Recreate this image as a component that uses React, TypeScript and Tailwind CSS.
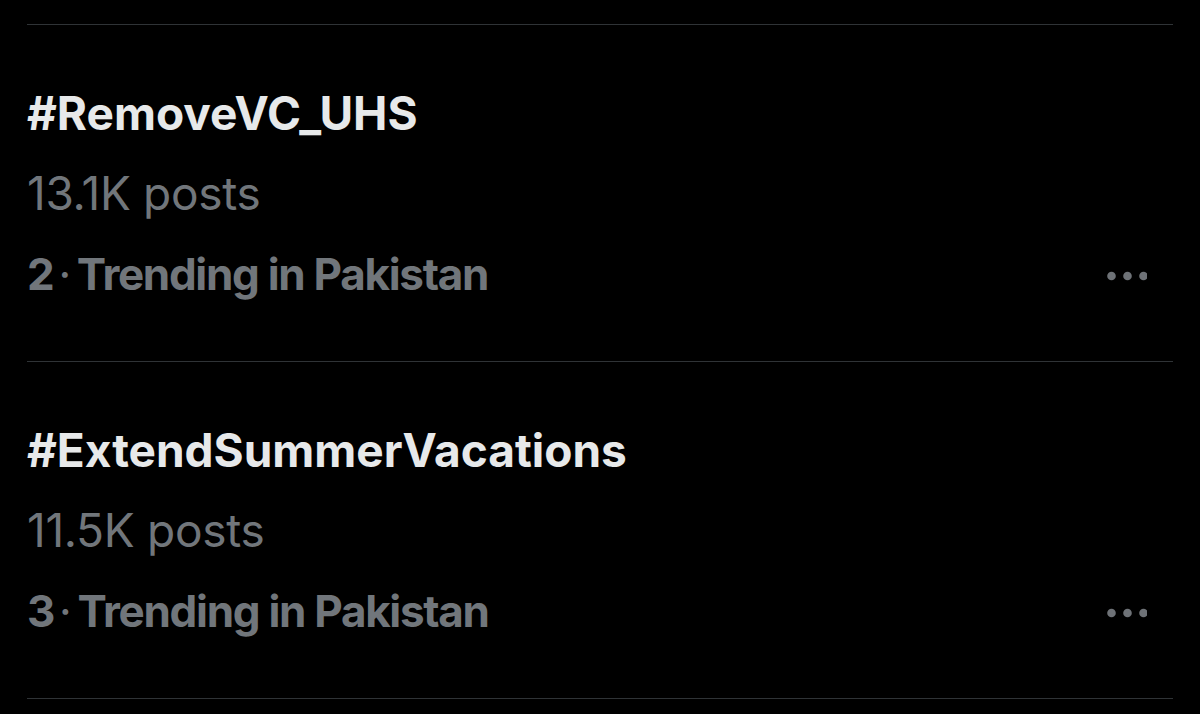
const trends = [
  { tag: '#RemoveVC_UHS', posts: '13.1K posts', rank: 2, place: 'Pakistan' },
  { tag: '#ExtendSummerVacations', posts: '11.5K posts', rank: 3, place: 'Pakistan' },
];

function MoreDots() {
  return (
    <svg width="40" height="10" viewBox="0 0 40 10" className="text-[#6e7277]">
      <circle cx="4.5" cy="5" r="4.3" fill="currentColor" />
      <circle cx="20.5" cy="5" r="4.3" fill="currentColor" />
      <circle cx="36.5" cy="5" r="4.3" fill="currentColor" />
    </svg>
  );
}

function TrendRow({ tag, posts, rank, place }: (typeof trends)[number]) {
  return (
    <div className="border-t border-[#2f3336] pt-[48px] pb-[48px] flex items-end justify-between">
      <div className="text-[46px] leading-[80px]">
        <div className="font-bold text-[#e7e9ea]">{tag}</div>
        <div className="text-[#71767b] tracking-[-0.3px]">{posts}</div>
        <div className="font-bold text-[44px] text-[#71767b] tracking-[-1.3px] pt-[2px] leading-[78px]">
          {rank}
          <span className="font-normal pl-[5px] pr-[7px]">·</span>
          Trending in {place}
        </div>
      </div>
      <div className="h-[80px] flex items-center pt-[6px] pr-[26px]">
        <MoreDots />
      </div>
    </div>
  );
}

export default function App() {
  return (
    <div
      className="w-[1200px] h-[714px] bg-black px-[27px] pt-[24px] overflow-hidden"
      style={{ fontFamily: 'Inter, "Noto Sans", sans-serif' }}
    >
      {trends.map((t) => (
        <TrendRow key={t.tag} {...t} />
      ))}
      <div className="border-t border-[#2f3336]" />
    </div>
  );
}
